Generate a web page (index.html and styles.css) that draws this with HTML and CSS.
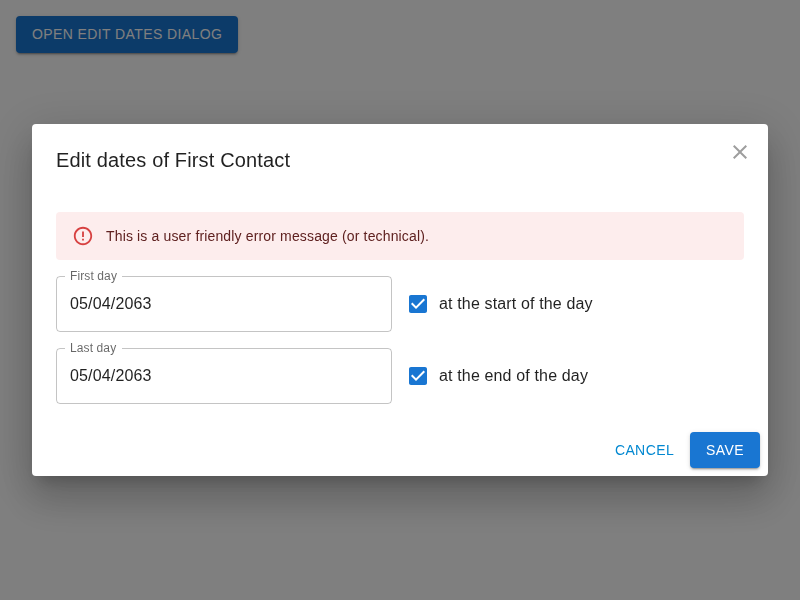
FILE: index.html
```html
<!DOCTYPE html>
<html lang="en">
<head>
<meta charset="utf-8">
<title>Edit dates</title>
<link rel="stylesheet" href="styles.css">
</head>
<body>
<button class="btn btn-contained btn-open">Open edit dates dialog</button>
<div class="backdrop">
  <div class="dialog" role="dialog" aria-labelledby="title">
    <h2 class="title" id="title">Edit dates of First Contact</h2>
    <button class="close" aria-label="Close"><svg viewBox="0 0 24 24"><path d="M19 6.41 17.59 5 12 10.59 6.41 5 5 6.41 10.59 12 5 17.59 6.41 19 12 13.41 17.59 19 19 17.59 13.41 12z"/></svg></button>
    <div class="content">
      <div class="alert" role="alert">
        <svg viewBox="0 0 24 24"><path d="M11 15h2v2h-2zm0-8h2v6h-2zm.99-5C6.47 2 2 6.48 2 12s4.47 10 9.99 10C17.52 22 22 17.52 22 12S17.52 2 11.99 2zM12 20c-4.42 0-8-3.58-8-8s3.58-8 8-8 8 3.58 8 8-3.58 8-8 8z"/></svg>
        <div class="message">This is a user friendly error message (or technical).</div>
      </div>
      <div class="row">
        <div class="field">
          <label for="first">First day</label>
          <fieldset><legend></legend><input id="first" value="05/04/2063"></fieldset>
        </div>
        <div class="check"><svg viewBox="0 0 24 24"><path d="M19 3H5c-1.11 0-2 .9-2 2v14c0 1.1.89 2 2 2h14c1.11 0 2-.9 2-2V5c0-1.1-.89-2-2-2zm-9 14l-5-5 1.41-1.41L10 14.17l7.59-7.59L19 8l-9 9z"/></svg><span>at the start of the day</span></div>
      </div>
      <div class="row">
        <div class="field">
          <label for="last">Last day</label>
          <fieldset><legend></legend><input id="last" value="05/04/2063"></fieldset>
        </div>
        <div class="check"><svg viewBox="0 0 24 24"><path d="M19 3H5c-1.11 0-2 .9-2 2v14c0 1.1.89 2 2 2h14c1.11 0 2-.9 2-2V5c0-1.1-.89-2-2-2zm-9 14l-5-5 1.41-1.41L10 14.17l7.59-7.59L19 8l-9 9z"/></svg><span>at the end of the day</span></div>
      </div>
    </div>
    <div class="actions">
      <button class="btn btn-text">Cancel</button>
      <button class="btn btn-contained">Save</button>
    </div>
  </div>
</div>
</body>
</html>
```
FILE: styles.css
```css
* { box-sizing: border-box; }
body {
  margin: 0;
  padding: 16px;
  background: #fff;
  color: rgba(0, 0, 0, .87);
  font: 400 16px/1.5 "Liberation Sans", Arial, sans-serif;
  letter-spacing: .15008px;
}
button { border: 0; margin: 0; cursor: pointer; }
svg { display: block; fill: currentColor; }
.btn {
  min-width: 64px;
  border-radius: 4px;
  font: 400 14px/24.5px "Liberation Sans", Arial, sans-serif;
  letter-spacing: .4px;
  text-transform: uppercase;
}
.btn-contained {
  padding: 6px 16px;
  background: #1976d2;
  color: #fff;
  box-shadow: 0 3px 1px -2px rgba(0,0,0,.2), 0 2px 2px 0 rgba(0,0,0,.14), 0 1px 5px 0 rgba(0,0,0,.12);
}
.btn-open { display: block; }
.btn-text { padding: 6px 8px; background: transparent; color: #0288d1; }
.backdrop {
  position: fixed;
  inset: 0;
  display: flex;
  align-items: center;
  justify-content: center;
  background: rgba(0, 0, 0, .5);
}
.dialog {
  position: relative;
  width: 736px;
  height: 352px;
  border-radius: 4px;
  background: #fff;
  box-shadow: 0 11px 15px -7px rgba(0,0,0,.2), 0 24px 38px 3px rgba(0,0,0,.14), 0 9px 46px 8px rgba(0,0,0,.12);
}
.title {
  height: 72px;
  margin: 0;
  padding: 20px 24px 16px;
  font-size: 20px;
  font-weight: 400;
  line-height: 32px;
}
.close {
  position: absolute;
  top: 8px;
  right: 8px;
  padding: 8px;
  background: transparent;
  color: #9e9e9e;
}
.close svg { width: 24px; height: 24px; }
.content {
  display: flex;
  flex-direction: column;
  gap: 16px;
  height: 228px;
  padding: 16px 24px 20px;
}
.alert {
  display: flex;
  height: 48px;
  padding: 6px 16px;
  border-radius: 4px;
  background: #fdeded;
  color: #5f2120;
  font-size: 14px;
  line-height: 20px;
}
.alert svg { width: 22px; height: 22px; margin: 7px 12px 7px 0; color: #d32f2f; opacity: .9; }
.message { padding: 8px 0; }
.row { display: flex; gap: 8px; }
.field { position: relative; width: 336px; height: 56px; }
.field label {
  position: absolute;
  top: 0;
  left: 0;
  color: rgba(0, 0, 0, .6);
  line-height: 23px;
  transform: translate(14px, -9px) scale(.75);
  transform-origin: top left;
}
.field fieldset {
  height: 61px;
  margin: -5px 0 0;
  padding: 0 8px;
  border: 1px solid rgba(0, 0, 0, .23);
  border-radius: 4px;
}
.field legend { width: 57px; height: 11px; padding: 0; }
.field input {
  display: block;
  width: 100%;
  height: 23px;
  margin-top: 10px;
  padding: 0 5px;
  border: 0;
  outline: 0;
  background: transparent;
  color: inherit;
  font: inherit;
  line-height: 23px;
  letter-spacing: inherit;
}
.check { display: flex; align-items: center; gap: 9px; padding-left: 6px; }
.check svg { width: 24px; height: 24px; color: #1976d2; }
.actions {
  display: flex;
  align-items: center;
  justify-content: flex-end;
  gap: 8px;
  padding: 8px;
}
.actions .btn { height: 36px; }
```
